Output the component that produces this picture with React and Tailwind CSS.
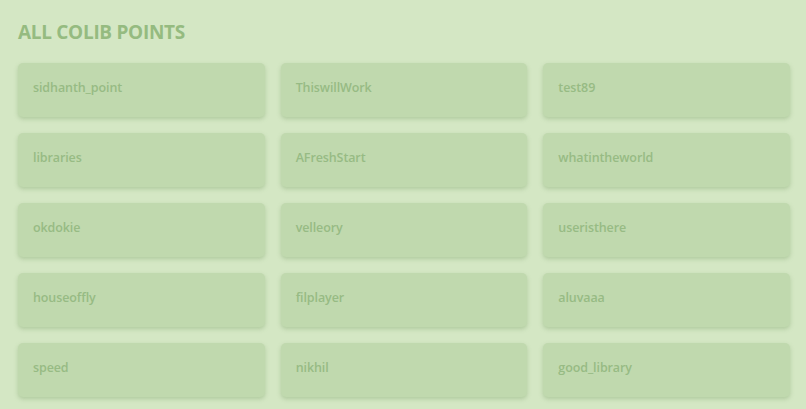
const POINTS = [
  "sidhanth_point", "ThiswillWork", "test89",
  "libraries", "AFreshStart", "whatintheworld",
  "okdokie", "velleory", "useristhere",
  "houseoffly", "filplayer", "aluvaaa",
  "speed", "nikhil", "good_library",
];

export default function App() {
  return (
    <div className="min-h-screen bg-[#d4e7c4] pl-[18px] pr-[16px] pt-[20px] pb-[12px] font-['Open_Sans',sans-serif]">
      <h1 className="text-[19px] leading-[24px] font-bold text-[#95bb80] tracking-[-0.3px]">ALL COLIB POINTS</h1>
      <div className="grid grid-cols-3 gap-x-[16px] gap-y-[16px] mt-[19px]">
        {POINTS.map((p) => (
          <div key={p} className="h-[54px] rounded-[5px] bg-[#c0d9ae] shadow-[0_2px_4px_rgba(110,150,90,0.35)] flex items-center px-[15px] pb-[4px]">
            <span className="text-[12.5px] font-semibold text-[#97bb84] tracking-[-0.1px]">{p}</span>
          </div>
        ))}
      </div>
    </div>
  );
}
